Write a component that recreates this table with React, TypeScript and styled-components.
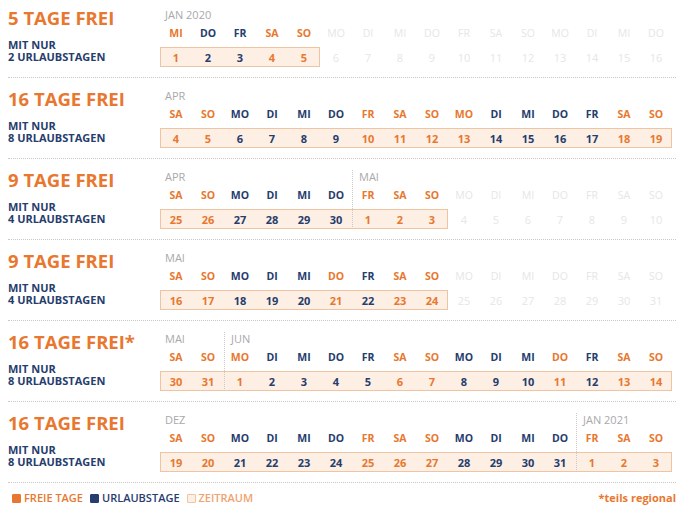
import React from "react";
import styled, { createGlobalStyle } from "styled-components";

const ORANGE = "#e8782f";
const NAVY = "#263d6d";
const GRAY = "#a9a9a9";
const FADE = "#e6e6e6";
const DOTS = "#c9c9c9";

const GlobalStyle = createGlobalStyle`
  html, body {
    margin: 0;
    padding: 0;
    background: #fff;
  }
  body {
    font-family: "Open Sans", "Liberation Sans", sans-serif;
    -webkit-font-smoothing: antialiased;
  }
`;

const Page = styled.div`
  width: 686px;
  height: 514px;
  overflow: hidden;
  padding: 0 10px 0 8px;
  box-sizing: border-box;
`;

const Row = styled.div<{ $first?: boolean }>`
  display: flex;
  padding-top: ${(p) => (p.$first ? 8 : 11)}px;
  padding-bottom: 10px;
  border-bottom: 1px dotted ${DOTS};
`;

const Info = styled.div`
  width: 152px;
  flex: none;
  display: flex;
  flex-direction: column;
`;

const Title = styled.div`
  margin-top: -1px;
  font-size: 18.5px;
  line-height: 22px;
  font-weight: 700;
  color: ${ORANGE};
  white-space: nowrap;
`;

const Sub = styled.div`
  margin-top: 10px;
  font-size: 11px;
  line-height: 12px;
  font-weight: 700;
  color: ${NAVY};
  white-space: nowrap;
`;

const Calendar = styled.div`
  display: grid;
  grid-template-columns: repeat(16, 32px);
  grid-template-rows: 18px 21px 20px;
`;

const Month = styled.div<{ $col: number; $divider: boolean }>`
  grid-column: ${(p) => p.$col + 1} / span 4;
  grid-row: ${(p) => (p.$divider ? "1 / 4" : "1")};
  align-self: stretch;
  padding-left: ${(p) => (p.$divider ? 6 : 5)}px;
  border-left: ${(p) => (p.$divider ? `1px dotted ${DOTS}` : "none")};
  font-size: 11px;
  line-height: 14px;
  color: ${GRAY};
  white-space: nowrap;
  z-index: 1;
`;

type Kind = "o" | "n" | "f";

const kindColor = (k: Kind) => (k === "o" ? ORANGE : k === "n" ? NAVY : FADE);

const DayLabel = styled.div<{ $col: number; $kind: Kind }>`
  grid-column: ${(p) => p.$col + 1};
  grid-row: 2;
  text-align: center;
  font-size: 10.5px;
  line-height: 14px;
  font-weight: ${(p) => (p.$kind === "f" ? 400 : 700)};
  color: ${(p) => kindColor(p.$kind)};
`;

const Range = styled.div<{ $span: number }>`
  grid-column: 1 / span ${(p) => p.$span};
  grid-row: 3;
  background: #fdefe4;
  border: 1px solid #efc4a2;
  box-sizing: border-box;
`;

const DayNum = styled.div<{ $col: number; $kind: Kind }>`
  grid-column: ${(p) => p.$col + 1};
  grid-row: 3;
  display: flex;
  align-items: center;
  justify-content: center;
  font-size: 11px;
  font-weight: ${(p) => (p.$kind === "f" ? 400 : 700)};
  color: ${(p) => kindColor(p.$kind)};
  z-index: 2;
`;

const Legend = styled.div`
  display: flex;
  align-items: center;
  padding: 8px 0 0 4px;
  font-size: 11px;
  line-height: 14px;
  font-weight: 600;
`;

const Key = styled.div<{ $color: string }>`
  display: flex;
  align-items: center;
  gap: 3px;
  margin-right: 7px;
  color: ${(p) => p.$color};
`;

const Swatch = styled.span<{ $fill: string; $border: string }>`
  width: 9px;
  height: 9px;
  box-sizing: border-box;
  border-radius: 1px;
  background: ${(p) => p.$fill};
  border: 1px solid ${(p) => p.$border};
`;

const Note = styled.div`
  margin-left: auto;
  font-weight: 700;
  color: ${ORANGE};
`;

const WD = ["MO", "DI", "MI", "DO", "FR", "SA", "SO"];

type Period = {
  title: string;
  days: number;
  wd: number;
  start: number;
  monthLen: number;
  kinds: string;
  months: { label: string; col: number }[];
};

const periods: Period[] = [
  { title: "5 TAGE FREI", days: 2, wd: 2, start: 1, monthLen: 31, kinds: "onnoofffffffffff", months: [{ label: "JAN 2020", col: 0 }] },
  { title: "16 TAGE FREI", days: 8, wd: 5, start: 4, monthLen: 30, kinds: "oonnnnoooonnnnoo", months: [{ label: "APR", col: 0 }] },
  { title: "9 TAGE FREI", days: 4, wd: 5, start: 25, monthLen: 30, kinds: "oonnnnoooffffff", months: [{ label: "APR", col: 0 }, { label: "MAI", col: 6 }] },
  { title: "9 TAGE FREI", days: 4, wd: 5, start: 16, monthLen: 31, kinds: "oonnnonoofffffff", months: [{ label: "MAI", col: 0 }] },
  { title: "16 TAGE FREI*", days: 8, wd: 5, start: 30, monthLen: 31, kinds: "ooonnnnoonnnonoo", months: [{ label: "MAI", col: 0 }, { label: "JUN", col: 2 }] },
  { title: "16 TAGE FREI", days: 8, wd: 5, start: 19, monthLen: 31, kinds: "oonnnnooonnnnooo", months: [{ label: "DEZ", col: 0 }, { label: "JAN 2021", col: 13 }] },
];

function PeriodRow({ p, first }: { p: Period; first?: boolean }) {
  const cells = Array.from({ length: 16 }, (_, i) => {
    const raw = p.start + i;
    return {
      wd: WD[(p.wd + i) % 7],
      n: raw > p.monthLen ? raw - p.monthLen : raw,
      kind: (p.kinds[i] || "f") as Kind,
    };
  });
  const span = cells.filter((c) => c.kind !== "f").length;

  return (
    <Row $first={first}>
      <Info>
        <Title>{p.title}</Title>
        <Sub>
          MIT NUR
          <br />
          {p.days} URLAUBSTAGEN
        </Sub>
      </Info>
      <Calendar>
        {cells.map((c, i) => (
          <DayLabel key={"l" + i} $col={i} $kind={c.kind}>
            {c.wd}
          </DayLabel>
        ))}
        <Range $span={span} />
        {cells.map((c, i) => (
          <DayNum key={"n" + i} $col={i} $kind={c.kind}>
            {c.n}
          </DayNum>
        ))}
        {p.months.map((m) => (
          <Month key={m.label} $col={m.col} $divider={m.col > 0}>
            {m.label}
          </Month>
        ))}
      </Calendar>
    </Row>
  );
}

export default function App() {
  return (
    <Page>
      <GlobalStyle />
      {periods.map((p, i) => (
        <PeriodRow key={i} p={p} first={i === 0} />
      ))}
      <Legend>
        <Key $color={ORANGE}>
          <Swatch $fill={ORANGE} $border={ORANGE} />
          FREIE TAGE
        </Key>
        <Key $color={NAVY}>
          <Swatch $fill={NAVY} $border={NAVY} />
          URLAUBSTAGE
        </Key>
        <Key $color="#f0a36e">
          <Swatch $fill="#fdefe4" $border="#efc4a2" />
          ZEITRAUM
        </Key>
        <Note>*teils regional</Note>
      </Legend>
    </Page>
  );
}
